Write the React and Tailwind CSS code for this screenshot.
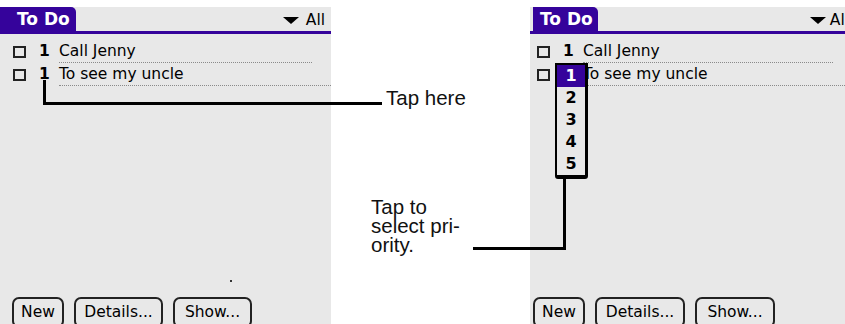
import React from "react";

const PURPLE = "bg-[#35039b]";

function Checkbox({ cls }) {
  return <div className={"w-[13px] h-[12px] border-2 border-[#222] shrink-0 " + cls} />;
}

function Row({ boxCls, numCls, textCls, num, text, lineCls }) {
  return (
    <div className="flex items-start h-[22px]">
      <Checkbox cls={boxCls} />
      <div className={"font-bold text-[15.5px] leading-[18px] text-black " + numCls}>{num}</div>
      <div className={"leading-[18px] text-[15.5px] text-black pb-[2px] border-b border-dotted border-[#8a8a8a] " + textCls + " " + lineCls}>
        {text}
      </div>
    </div>
  );
}

function Btn({ label, w }) {
  return (
    <div
      className={
        "h-[31px] border-2 border-[#222] rounded-[7px] flex items-start justify-center pt-[4px] text-[15.5px] leading-[18px] text-black " +
        w
      }
    >
      {label}
    </div>
  );
}

function LeftScreen() {
  return (
    <div className="relative w-[331px] h-full bg-[#e8e8e8] flex flex-col" style={{ fontFamily: '"DejaVu Sans", sans-serif' }}>
      <div className="flex items-end h-[27px] border-b-[3px] border-[#35039b]">
        <div className={"w-[76px] h-[24px] rounded-tr-[5px] pl-[17px] text-white font-bold text-[17px] leading-[24px] " + PURPLE}>
          To Do
        </div>
        <div className="flex-1" />
        <div className="flex items-center self-start mt-[6px] mr-[6px]">
          <div className="w-0 h-0 border-l-[8px] border-r-[8px] border-t-[7px] border-l-transparent border-r-transparent border-t-black" />
          <div className="ml-[7px] text-[15.5px] leading-[14px] text-black">All</div>
        </div>
      </div>
      <div className="mt-[8px] flex flex-col gap-[1px]">
        <Row boxCls="ml-[13px] mt-[4px]" numCls="ml-[13px] w-[20px]" textCls="ml-[0px]" lineCls="w-[253px]" num="1" text="Call Jenny" />
        <Row boxCls="ml-[13px] mt-[4px]" numCls="ml-[13px] w-[20px]" textCls="ml-[0px]" lineCls="flex-1" num="1" text="To see my uncle" />
      </div>
      <div className="flex-1" />
      <div className="h-[27px] flex items-start gap-[10px] pl-[12px]">
        <Btn label="New" w="w-[52px]" />
        <Btn label="Details..." w="w-[89px]" />
        <Btn label="Show..." w="w-[79px]" />
      </div>
      <div className="absolute left-[230px] top-[273px] w-[2px] h-[2px] bg-[#333]" />
    </div>
  );
}

function RightScreen() {
  return (
    <div className="relative w-[315px] h-full bg-[#e8e8e8] flex flex-col overflow-hidden" style={{ fontFamily: '"DejaVu Sans", sans-serif' }}>
      <div className="flex items-end h-[27px] border-b-[3px] border-[#35039b]">
        <div className={"ml-[3px] w-[65px] h-[24px] rounded-tr-[5px] pl-[7px] text-white font-bold text-[17px] leading-[24px] " + PURPLE}>
          To Do
        </div>
        <div className="flex-1" />
        <div className="flex items-center self-start mt-[6px] mr-[-4px] shrink-0">
          <div className="w-0 h-0 border-l-[8px] border-r-[8px] border-t-[7px] border-l-transparent border-r-transparent border-t-black" />
          <div className="ml-[4px] text-[15.5px] leading-[14px] text-black">All</div>
        </div>
      </div>
      <div className="mt-[8px] flex flex-col gap-[1px]">
        <Row boxCls="ml-[7px] mt-[4px]" numCls="ml-[13px] w-[20px]" textCls="ml-[0px]" lineCls="w-[250px]" num="1" text="Call Jenny" />
        <Row boxCls="ml-[7px] mt-[4px]" numCls="ml-[13px] w-[20px]" textCls="ml-[0px]" lineCls="flex-1" num="1" text="To see my uncle" />
      </div>
      <div className="flex-1" />
      <div className="h-[27px] flex items-start gap-[10px] pl-[3px]">
        <Btn label="New" w="w-[52px]" />
        <Btn label="Details..." w="w-[90px]" />
        <Btn label="Show..." w="w-[80px]" />
      </div>

      {/* priority popup */}
      <div className="absolute left-[25px] top-[56px] w-[33px] h-[116px] bg-[#e8e8e8] border-l-2 border-t-2 border-r-[3px] border-b-[4px] border-black rounded-b-[3px] flex flex-col">
        {["1", "2", "3", "4", "5"].map((n, i) => (
          <div
            key={n}
            className={
              "h-[22px] flex items-center justify-center font-bold text-[16px] " +
              (i === 0 ? "bg-[#35039b] text-white" : "text-black")
            }
          >
            {n}
          </div>
        ))}
      </div>
    </div>
  );
}

export default function App() {
  return (
    <div className="relative w-[845px] h-[324px] overflow-hidden bg-white">
      <div className="flex h-full pt-[7px]">
        <LeftScreen />
        <div className="w-[199px]" />
        <RightScreen />
      </div>

      {/* callout: Tap here */}
      <div className="absolute left-[43px] top-[80px] w-[3px] h-[25px] bg-black" />
      <div className="absolute left-[43px] top-[102px] w-[339px] h-[3px] bg-black" />
      <div
        className="absolute left-[386px] top-[88px] text-[20.5px] leading-[20px] text-[#111]"
        style={{ fontFamily: '"Liberation Sans", Arial, sans-serif' }}
      >
        Tap here
      </div>

      {/* callout: Tap to select priority */}
      <div className="absolute left-[563px] top-[179px] w-[3px] h-[71px] bg-black" />
      <div className="absolute left-[473px] top-[247px] w-[93px] h-[3px] bg-black" />
      <div
        className="absolute left-[371px] top-[197px] text-[20.5px] leading-[19px] text-[#111]"
        style={{ fontFamily: '"Liberation Sans", Arial, sans-serif' }}
      >
        <div>Tap to</div>
        <div>select pri-</div>
        <div>ority.</div>
      </div>
    </div>
  );
}
